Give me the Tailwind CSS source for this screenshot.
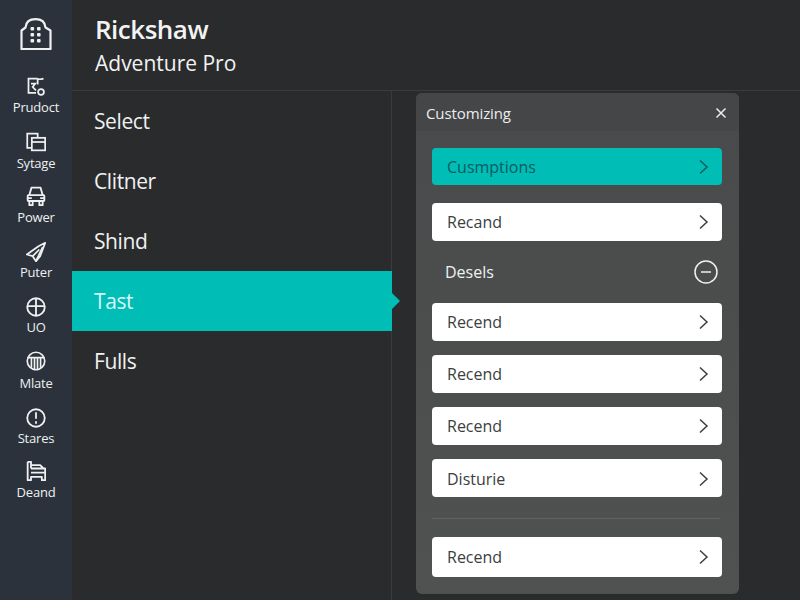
<!DOCTYPE html>
<html lang="en">
<head>
  <meta charset="UTF-8">
  <meta name="viewport" content="width=device-width, initial-scale=1.0">
  <title>Rickshaw Adventure Pro</title>
  <script src="https://cdn.jsdelivr.net/npm/@tailwindcss/browser@4"></script>
</head>
<body class="bg-[#2a2b2c] font-['Open_Sans',sans-serif]">
  <div class="flex w-[800px] h-[600px] overflow-hidden">
    <!-- icon rail -->
    <nav class="w-[72px] shrink-0 bg-[#2b323b] text-[#eef0f1] flex flex-col items-center">
      <svg class="mt-[18px] w-8 h-8" viewBox="0 0 32 32" fill="none" stroke="currentColor" stroke-width="2.2" stroke-linejoin="round">
        <path d="M1.5 31V12.5L5.5 9.5C6 4 10 1.2 15.5 1.2S25 4 25.5 9.5L30.5 12.5V31Z"/>
        <g fill="currentColor" stroke="none"><rect x="10.5" y="9" width="3.6" height="3.6" rx="1"/><rect x="17" y="9" width="3.6" height="3.6" rx="1"/><rect x="10.5" y="15" width="3.6" height="3.6" rx="1"/><rect x="17" y="15" width="3.6" height="3.6" rx="1"/><rect x="10.5" y="21" width="3.6" height="3.6" rx="1"/><rect x="17" y="21" width="3.6" height="3.6" rx="1"/></g>
      </svg>
      <ul class="mt-[27px] flex flex-col items-center text-[13px] leading-[16px] tracking-[-0.2px]">
        <li class="h-[55px] flex flex-col items-center">
          <svg class="w-5 h-5" viewBox="0 0 24 24" fill="none" stroke="currentColor" stroke-width="2.1"><path d="M12 19H3V2H14M14 2C15 3 17 3 21 2M6 8L11 8L8 12L12 16M14 2V9"/><circle cx="18" cy="18" r="3.5"/></svg>
          <span class="mt-[2px]">Prudoct</span>
        </li>
        <li class="h-[54px] flex flex-col items-center">
          <svg class="w-5 h-5" viewBox="0 0 24 24" fill="none" stroke="currentColor" stroke-width="2.1"><path d="M7 19H1.5V2H14V7"/><rect x="7" y="7" width="16" height="15"/><path d="M7 12H23"/></svg>
          <span class="mt-[3px]">Sytage</span>
        </li>
        <li class="h-[56px] flex flex-col items-center">
          <svg class="w-5 h-5" viewBox="0 0 24 24" fill="none" stroke="currentColor" stroke-width="2.2" stroke-linejoin="round"><path d="M4 11L6.5 2H17.5L20 11"/><rect x="2" y="11" width="20" height="7" rx="1"/><path d="M4 18V23H8V18M16 18V23H20V18M2 14.5H7M17 14.5H22"/></svg>
          <span class="mt-[3px]">Power</span>
        </li>
        <li class="h-[55px] flex flex-col items-center">
          <svg class="w-5 h-5" viewBox="0 0 24 24" fill="none" stroke="currentColor" stroke-width="2.1" stroke-linejoin="round"><path d="M23 1L15 5L1 15L8 17L12 23L17 17Z"/><path d="M8 17L16 9M12 23L20 6"/></svg>
          <span class="mt-[2px]">Puter</span>
        </li>
        <li class="h-[54px] flex flex-col items-center">
          <svg class="w-5 h-5" viewBox="0 0 24 24" fill="none" stroke="currentColor" stroke-width="2.2"><circle cx="12" cy="12" r="10.5"/><path d="M12 1.5V22.5M1.5 11H22.5"/></svg>
          <span class="mt-[2px]">UO</span>
        </li>
        <li class="h-[57px] flex flex-col items-center">
          <svg class="w-5 h-5" viewBox="0 0 24 24" fill="none" stroke="currentColor" stroke-width="2"><circle cx="12" cy="12" r="10.5"/><path d="M2 8H22M6.5 8V20M10.2 8V23M13.8 8V23M17.5 8V20"/></svg>
          <span class="mt-[4px]">Mlate</span>
        </li>
        <li class="h-[53px] flex flex-col items-center">
          <svg class="w-5 h-5" viewBox="0 0 24 24" fill="none" stroke="currentColor" stroke-width="2.2"><circle cx="12" cy="12" r="10.5"/><path d="M12 5V13M12 16V19"/></svg>
          <span class="mt-[2px]">Stares</span>
        </li>
        <li class="flex flex-col items-center">
          <svg class="w-5 h-5" viewBox="0 0 24 24" fill="none" stroke="currentColor" stroke-width="2.2" stroke-linejoin="round"><path d="M2 1V23H6V19H19V23H23V9H6M2 1H6V9M6 14H23M6 5H17L21 9"/></svg>
          <span class="mt-[3px]">Deand</span>
        </li>
      </ul>
    </nav>

    <main class="flex-1 flex flex-col min-w-0">
      <header class="h-[91px] shrink-0 border-b border-[#3a3b3c] pl-[23px] pt-[11px] text-[#f2f3f3]">
        <h1 class="text-[26px] leading-[36px] font-semibold tracking-[-0.5px]">Rickshaw</h1>
        <p class="text-[21px] leading-[32px]">Adventure Pro</p>
      </header>
      <div class="flex flex-1 min-h-0">
        <ul class="w-[320px] shrink-0 border-r border-[#3a3b3c] text-[21px] text-[#f0f1f1] tracking-[-0.4px]">
          <li class="h-[60px] flex items-center pt-[2px] pl-[22px]">Select</li>
          <li class="h-[60px] flex items-center pt-[2px] pl-[22px]">Clitner</li>
          <li class="h-[60px] flex items-center pt-[2px] pl-[22px]">Shind</li>
          <li class="relative h-[60px] -mr-px flex items-center pt-[2px] pl-[22px] bg-[#00bdb5] text-[#d8f7f5]">Tast
            <span class="absolute left-full top-[22px] border-y-[8px] border-y-transparent border-l-[8px] border-l-[#00bdb5]"></span>
          </li>
          <li class="h-[60px] flex items-center pt-[2px] pl-[22px]">Fulls</li>
        </ul>

        <section class="ml-[24px] mt-[2px] mb-[6px] w-[323px] rounded-md bg-linear-to-b from-[#484a4b] to-[#505251] flex flex-col">
          <div class="h-[38px] shrink-0 flex items-center justify-between pt-[2px] pl-[10px] pr-[12px] bg-[#444647] rounded-t-md text-[#eceded]">
            <span class="text-[15px] tracking-[-0.1px]">Customizing</span>
            <svg class="w-3 h-3" viewBox="0 0 12 12" fill="none" stroke="currentColor" stroke-width="1.5"><path d="M1.5 1.5L10.5 10.5M10.5 1.5L1.5 10.5"/></svg>
          </div>
          <div class="pl-[16px] pr-[17px] pt-[17px] flex flex-col text-[16px]">
            <a class="h-[37px] rounded-[4px] bg-[#00bdb5] text-[#0e5a60] flex items-center justify-between pl-[15px] pr-[13px]">Cusmptions
              <svg class="w-3 h-4" viewBox="0 0 12 16" fill="none" stroke="currentColor" stroke-width="1.5"><path d="M3 1.5L10 8L3 14.5"/></svg>
            </a>
            <a class="mt-[18px] h-[38px] rounded-[4px] bg-white text-[#3c3e40] flex items-center justify-between pl-[15px] pr-[13px]">Recand
              <svg class="w-3 h-4" viewBox="0 0 12 16" fill="none" stroke="currentColor" stroke-width="1.5"><path d="M3 1.5L10 8L3 14.5"/></svg>
            </a>
            <div class="h-[62px] flex items-center justify-between pl-[13px] pr-[4px] text-[#f0f1f1] font-medium">Desels
              <svg class="w-6 h-6" viewBox="0 0 24 24" fill="none" stroke="currentColor" stroke-width="1.5"><circle cx="12" cy="12" r="11"/><path d="M7 12H17"/></svg>
            </div>
            <a class="h-[38px] rounded-[4px] bg-white text-[#3c3e40] flex items-center justify-between pl-[15px] pr-[13px]">Recend
              <svg class="w-3 h-4" viewBox="0 0 12 16" fill="none" stroke="currentColor" stroke-width="1.5"><path d="M3 1.5L10 8L3 14.5"/></svg>
            </a>
            <a class="mt-[14px] h-[38px] rounded-[4px] bg-white text-[#3c3e40] flex items-center justify-between pl-[15px] pr-[13px]">Recend
              <svg class="w-3 h-4" viewBox="0 0 12 16" fill="none" stroke="currentColor" stroke-width="1.5"><path d="M3 1.5L10 8L3 14.5"/></svg>
            </a>
            <a class="mt-[14px] h-[38px] rounded-[4px] bg-white text-[#3c3e40] flex items-center justify-between pl-[15px] pr-[13px]">Recend
              <svg class="w-3 h-4" viewBox="0 0 12 16" fill="none" stroke="currentColor" stroke-width="1.5"><path d="M3 1.5L10 8L3 14.5"/></svg>
            </a>
            <a class="mt-[14px] h-[38px] rounded-[4px] bg-white text-[#3c3e40] flex items-center justify-between pt-[2px] pl-[15px] pr-[13px]">Disturie
              <svg class="w-3 h-4" viewBox="0 0 12 16" fill="none" stroke="currentColor" stroke-width="1.5"><path d="M3 1.5L10 8L3 14.5"/></svg>
            </a>
            <hr class="mt-[21px] mr-[2px] border-[#5f6362]">
            <a class="mt-[18px] h-[40px] rounded-[4px] bg-white text-[#3c3e40] flex items-center justify-between pl-[15px] pr-[13px]">Recend
              <svg class="w-3 h-4" viewBox="0 0 12 16" fill="none" stroke="currentColor" stroke-width="1.5"><path d="M3 1.5L10 8L3 14.5"/></svg>
            </a>
          </div>
        </section>
      </div>
    </main>
  </div>
</body>
</html>
